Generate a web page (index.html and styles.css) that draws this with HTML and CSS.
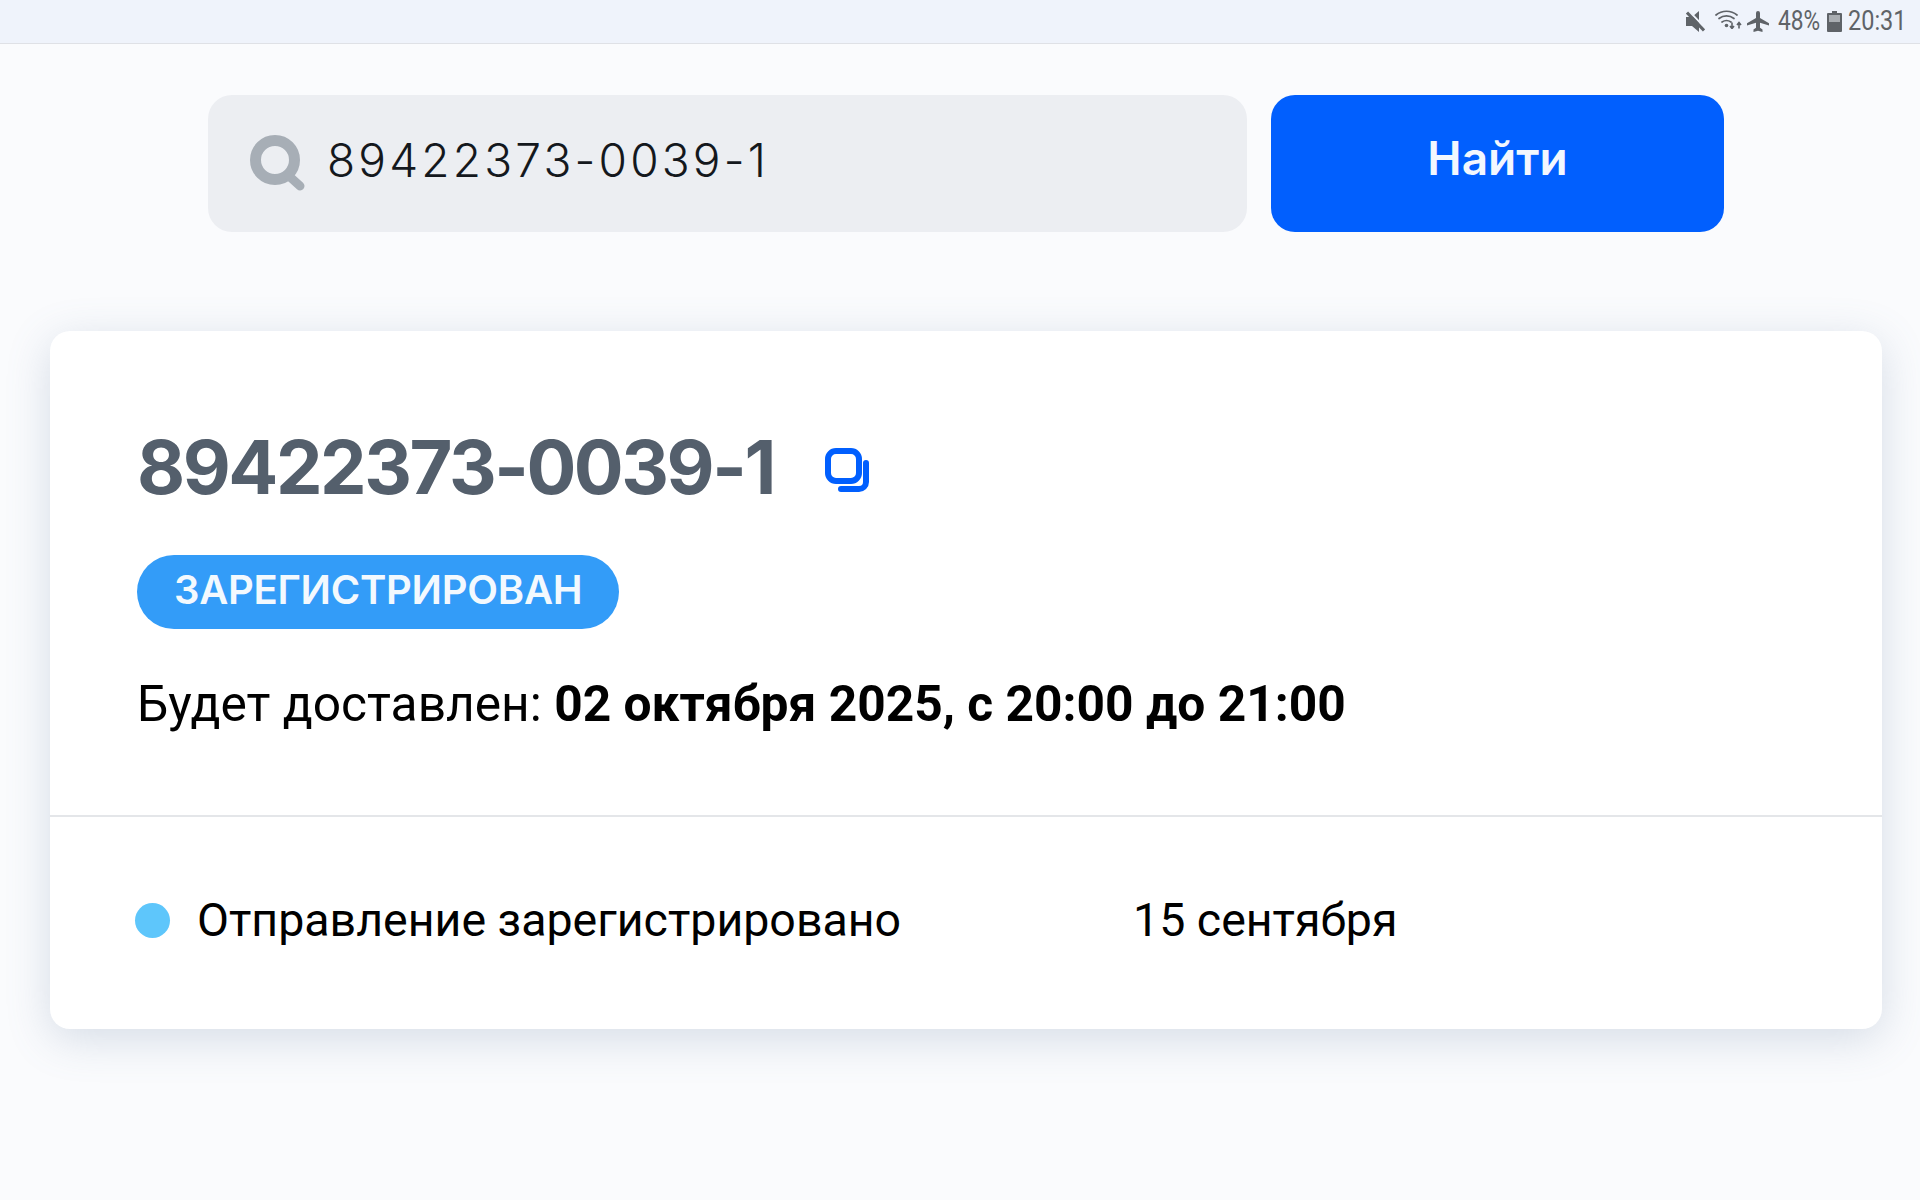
FILE: index.html
```html
<!DOCTYPE html>
<html lang="ru">
<head>
<meta charset="utf-8">
<title>Отслеживание</title>
<link rel="stylesheet" href="styles.css">
</head>
<body>
<header class="statusbar">
  <svg class="st-mute" viewBox="0 0 19 21"><path d="M0 6h6l7-6v21l-7-6H0z" fill="#5f6368"/><path d="M3 0l16 17" stroke="#eff3fb" stroke-width="2" fill="none"/><path d="M1 1.500l17 18" stroke="#5f6368" stroke-width="3" fill="none"/></svg>
  <svg class="st-wifi" viewBox="0 0 28 19"><g fill="none" stroke="#5f6368" stroke-width="1.700" stroke-linecap="round"><path d="M1 5C7 0 16 0 22 5"/><path d="M4 8.500c4.500-3.500 10.500-3.500 15 0"/><path d="M7 12c3-2 6-2 9 0"/></g><circle cx="11.500" cy="15.500" r="1.800" fill="#5f6368"/><path d="M17 12.500v6M15 16l2 2.500 2-2.500M24 18.500v-6M22 15l2-2.500 2 2.500" fill="none" stroke="#5f6368" stroke-width="1.600"/></svg>
  <svg class="st-plane" viewBox="0 0 22 21"><path d="M22 14.500v-2.200l-9-5.300V2a2 2 0 0 0-4 0v5L0 12.300v2.200l9-2.700v5L6.500 18.500V21l4.500-1.200 4.500 1.200v-2.500L13 16.800v-5z" fill="#5f6368"/></svg>
  <span class="st-text st-pct">48%</span>
  <svg class="st-batt" viewBox="0 0 15 21"><path d="M5 0h5v2h4a1 1 0 0 1 1 1v17a1 1 0 0 1-1 1H1a1 1 0 0 1-1-1V3a1 1 0 0 1 1-1h4z" fill="#5f6368"/><rect x="2" y="4" width="11" height="7" fill="#a9adb2"/></svg>
  <span class="st-text st-time">20:31</span>
</header>

<main class="page">
  <form class="search">
    <div class="search-field">
      <svg class="search-icon" viewBox="0 0 55 56"><circle cx="25" cy="25" r="19.500" fill="none" stroke="#a7aeb6" stroke-width="11"/><path d="M39 41l11 10" stroke="#a7aeb6" stroke-width="9" stroke-linecap="round" fill="none"/></svg>
      <span class="search-value">89422373-0039-1</span>
    </div>
    <button class="search-btn" type="button">Найти</button>
  </form>

  <section class="card">
    <div class="card-head">
      <div class="title-row">
        <h1 class="track">89422373-0039-1</h1>
        <svg class="copy" viewBox="0 0 44 44"><rect x="3" y="3" width="31" height="30" rx="8" fill="none" stroke="#015ffe" stroke-width="6"/><path d="M41 15v19a7 7 0 0 1-7 7H16" fill="none" stroke="#015ffe" stroke-width="6" stroke-linecap="round"/></svg>
      </div>
      <span class="badge">ЗАРЕГИСТРИРОВАН</span>
      <p class="eta">Будет доставлен: <b>02 октября 2025, с 20:00 до 21:00</b></p>
    </div>
    <div class="history">
      <span class="dot"></span>
      <span class="event">Отправление зарегистрировано</span>
      <span class="date">15 сентября</span>
    </div>
  </section>
</main>
</body>
</html>
```

FILE: styles.css
```css
* { box-sizing: border-box; }
html, body { margin: 0; height: 100%; }
body { background: #fafbfd; font-family: Roboto, sans-serif; color: #000; width: 1920px; height: 1200px; overflow: hidden; }

.statusbar { height: 44px; background: #eff3fb; border-bottom: 1px solid #dfe1e6; display: flex; align-items: center; justify-content: flex-end; padding: 0 15px 1px 0; color: #5f6368; }
.st-mute { width: 19px; height: 21px; margin-right: 10px; }
.st-wifi { width: 28px; height: 19px; margin: -4px 4px 0 0; }
.st-plane { width: 22px; height: 21px; margin-right: 9px; }
.st-text { font-size: 27px; line-height: 30px; white-space: nowrap; transform-origin: left center; }
.st-pct { width: 42px; transform: scaleX(.84); }
.st-time { width: 57px; transform: scaleX(.87); }
.st-batt { width: 15px; height: 21px; margin: 0 6px 0 7px; }

.page { display: flex; flex-direction: column; }
.search { display: flex; gap: 24px; padding: 51px 196px 0 208px; }
.search-field { width: 1039px; height: 137px; background: #eceef2; border-radius: 24px; display: flex; align-items: center; padding: 0 0 0 42px; }
.search-icon { width: 55px; height: 56px; flex: none; margin-top: -2px; }
.search-value { font-family: Inter, sans-serif; font-size: 46px; font-weight: 350; letter-spacing: 3.2px; color: #14181d; margin: -7px 0 0 22px; }
.search-btn { width: 453px; height: 137px; border: 0; border-radius: 24px; background: #015ffe; color: #f3f7fe; font-family: Inter, sans-serif; font-weight: 600; font-size: 46px; padding: 0 0 11px; }

.card { margin: 99px 38px 0 50px; height: 698px; background: #fff; border-radius: 20px; box-shadow: 0 10px 44px rgba(100, 125, 160, .24); }
.card-head { height: 486px; padding: 98px 87px 0; border-bottom: 2px solid #e4e6e9; }
.title-row { display: flex; align-items: center; gap: 51px; height: 76px; }
.track { margin: 0; font-family: Inter, sans-serif; font-weight: 700; font-size: 74px; line-height: 76px; color: #545f6c; letter-spacing: -2.45px; }
.copy { width: 44px; height: 44px; margin-top: 6px; }
.badge { display: inline-block; margin-top: 50px; height: 74px; line-height: 70px; padding: 0 37px; border-radius: 37px; background: #339cf8; color: #f3f9fe; font-family: Inter, sans-serif; font-weight: 600; font-size: 40px; letter-spacing: -0.25px; }
.eta { margin: 47px 0 0; font-size: 49.7px; line-height: 56px; }
.eta b { font-weight: 700; }

.history { display: flex; align-items: center; height: 206px; padding: 0 0 0 85px; font-size: 46.5px; }
.dot { width: 35px; height: 35px; border-radius: 50%; background: #5ec6fb; margin-right: 27px; }
.event { width: 936px; }
```
